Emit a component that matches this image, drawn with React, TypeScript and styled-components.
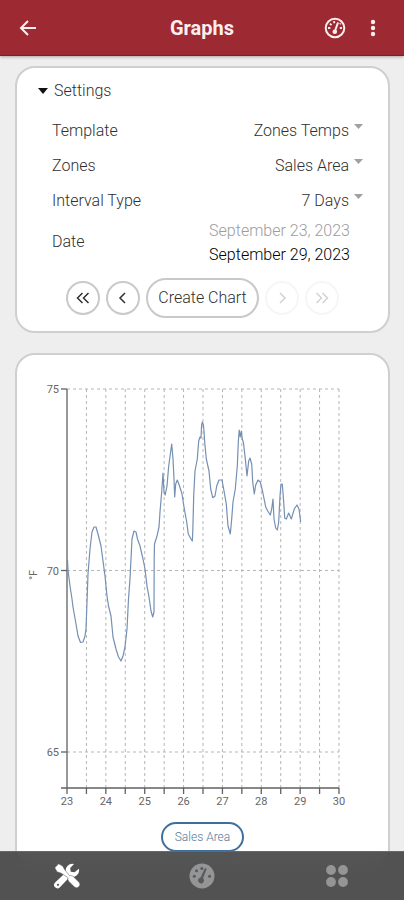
import React, { useState } from "react";
import styled, { createGlobalStyle } from "styled-components";

const GlobalStyle = createGlobalStyle`
  *, *::before, *::after { box-sizing: border-box; }
  body {
    margin: 0;
    background: #eeeeee;
    color: #303030;
    font-family: Roboto, "Liberation Sans", sans-serif;
    font-size: 16px;
    font-weight: 300;
    line-height: 20px;
  }
  button, select, input { font: inherit; color: inherit; }
`;

const Shell = styled.div`
  position: relative;
  display: flex;
  flex-direction: column;
  height: 100vh;
  overflow: hidden;
`;

const TopBar = styled.header`
  display: grid;
  grid-template-columns: 1fr auto 1fr;
  align-items: center;
  flex: none;
  height: 56px;
  padding: 0 18px;
  color: #fbeeee;
  background: #9d2932;
  border-bottom: 1px solid #8c1a24;
  box-shadow: 0 1px 3px rgba(0, 0, 0, 0.3);
  z-index: 1;
`;

const Title = styled.h1`
  margin: 0;
  font-size: 20px;
  line-height: 24px;
  font-weight: 700;
`;

const BarGroup = styled.div<{ $end?: boolean }>`
  display: flex;
  justify-content: ${(p) => (p.$end ? "flex-end" : "flex-start")};
  gap: 14px;
`;

const BarButton = styled.button`
  display: flex;
  align-items: center;
  justify-content: center;
  min-width: 20px;
  height: 24px;
  padding: 0;
  border: 0;
  background: none;
`;

const MoreButton = styled(BarButton)`
  min-width: 26px;
`;

const Content = styled.main`
  display: flex;
  flex-direction: column;
  gap: 20px;
  flex: 1;
  min-height: 0;
  padding: 10px 14px 64px 15px;
  overflow-y: auto;
  scrollbar-width: none;
`;

const Card = styled.section`
  flex: none;
  background: #ffffff;
  border: 2px solid #cfcfcf;
  border-radius: 20px;
`;

const SettingsCard = styled(Card)`
  padding: 13px 20px;
`;

const ChartCard = styled(Card)`
  padding-bottom: 16px;
`;

const SectionToggle = styled.button`
  display: flex;
  align-items: center;
  gap: 5px;
  margin-bottom: 12px;
  padding: 0;
  border: 0;
  background: none;
`;

const Fields = styled.div`
  display: flex;
  flex-direction: column;
  padding-left: 15px;
`;

const Field = styled.div`
  display: flex;
  align-items: center;
  justify-content: space-between;
  min-height: 35px;
`;

const SelectBox = styled.div`
  display: flex;
  gap: 5px;
  padding-right: 5px;
`;

const Select = styled.select`
  appearance: none;
  width: 140px;
  height: 20px;
  padding: 0;
  border: 0;
  outline: 0;
  background: none;
  text-align-last: right;
`;

const Caret = styled.svg`
  margin-top: 3px;
  fill: #a0a0a0;
`;

const DateRange = styled.div`
  display: flex;
  flex-direction: column;
  padding-right: 18px;
`;

const DateInput = styled.input<{ $muted?: boolean }>`
  width: 150px;
  height: 24px;
  padding: 0;
  border: 0;
  outline: 0;
  background: none;
  text-align: right;
  color: ${(p) => (p.$muted ? "#9c9c9c" : "#000000")};
`;

const Controls = styled.div`
  display: flex;
  align-items: center;
  justify-content: center;
  gap: 6px;
  margin-top: 12px;
`;

const RoundButton = styled.button`
  display: flex;
  align-items: center;
  justify-content: center;
  width: 34px;
  height: 34px;
  padding: 0;
  border: 2px solid #c9c9c9;
  border-radius: 50%;
  background: #ffffff;
  &:disabled {
    color: #d2d2d2;
    border-color: #f6f6f6;
  }
`;

const CreateButton = styled.button`
  height: 40px;
  padding: 0 10px;
  border: 2px solid #c9c9c9;
  border-radius: 20px;
  background: #ffffff;
`;

const Chart = styled.svg`
  display: block;
  width: 100%;
  height: auto;
`;

const AxisText = styled.text`
  font-size: 11px;
  font-weight: 400;
  fill: #666666;
`;

const Legend = styled.div`
  display: flex;
  justify-content: center;
`;

const LegendButton = styled.button`
  height: 30px;
  padding: 0 12px;
  border: 2px solid #3f6f9c;
  border-radius: 15px;
  background: #ffffff;
  color: #58779b;
  font-size: 12px;
`;

const TabBar = styled.nav`
  position: absolute;
  left: 0;
  right: 0;
  bottom: 0;
  display: grid;
  grid-template-columns: repeat(3, 1fr);
  height: 49px;
  background: rgba(48, 48, 48, 0.82);
  border-top: 1px solid #686868;
  border-bottom: 1px solid #694a4c;
  backdrop-filter: blur(8px);
`;

const Tab = styled.a<{ $active?: boolean }>`
  display: flex;
  align-items: center;
  justify-content: center;
  color: ${(p) => (p.$active ? "#ffffff" : "#959595")};
`;

function BackIcon() {
  return (
    <svg width="18" height="18" viewBox="0 0 18 18" fill="none" stroke="currentColor" strokeWidth="2">
      <path d="M17 9H2.5M9 2 2 9l7 7" />
    </svg>
  );
}

function GaugeOutlineIcon() {
  return (
    <svg width="22" height="22" viewBox="0 0 22 22" fill="none" stroke="currentColor">
      <circle cx="11" cy="11" r="9.3" strokeWidth="2" />
      <path d="M13.8 6.2 11 14" strokeWidth="2" strokeLinecap="round" />
      <circle cx="10.8" cy="14.7" r="2.3" fill="currentColor" stroke="none" />
      <path d="M4 11h2.4M5.9 6.6l1.7 1.5M10.2 4v2.2M15.8 11H18M15.8 7.2l.9-.8" strokeWidth="1.8" />
    </svg>
  );
}

function GaugeIcon() {
  return (
    <svg width="26" height="26" viewBox="0 0 26 26">
      <circle cx="13" cy="13" r="12.5" fill="currentColor" />
      <g fill="#555b5e">
        <circle cx="5.3" cy="13.2" r="1.5" />
        <circle cx="7.5" cy="7.8" r="1.5" />
        <circle cx="12.8" cy="5.4" r="1.5" />
        <circle cx="20.6" cy="13.2" r="1.5" />
        <path d="M17.4 6.4 14 15.2a3 3 0 1 1-2.4-.7l4-8.7c.5-1 2.1-.3 1.8.6Z" />
      </g>
    </svg>
  );
}

function MoreIcon() {
  return (
    <svg width="6" height="18" viewBox="0 0 6 18" fill="currentColor">
      <circle cx="3" cy="3" r="2.2" />
      <circle cx="3" cy="9" r="2.2" />
      <circle cx="3" cy="15" r="2.2" />
    </svg>
  );
}

function ToolsIcon() {
  return (
    <svg width="26" height="26" viewBox="0 0 26 26">
      <path
        d="M24.9 5.7a6.6 6.6 0 0 1-8.7 7.8L5.9 24.2a3.3 3.3 0 0 1-4.8-4.7L12 9.2A6.6 6.6 0 0 1 20 1l-3.8 3.9.5 3.8 3.9.6Z"
        fill="currentColor"
      />
      <circle cx="4" cy="21.8" r="1.1" fill="#555555" />
      <path
        d="M.8 4.8 4.6.8 8.6 3l2 3.6 5.1 6.2c1.3-.4 2.8-.1 3.8.9l5.3 5.4c1.4 1.4 1.4 3.2 0 4.6-1.3 1.3-3.2 1.3-4.6 0l-5.3-5.3c-1-1-1.3-2.4-.9-3.7L7.2 10.2 3 8.8Z"
        fill="currentColor"
        stroke="#555555"
        strokeWidth="0.5"
      />
    </svg>
  );
}

function AppsIcon() {
  return (
    <svg width="22" height="22" viewBox="0 0 22 22" fill="currentColor">
      <circle cx="5" cy="5" r="4.9" />
      <circle cx="17" cy="5" r="4.9" />
      <circle cx="5" cy="17" r="4.9" />
      <circle cx="17" cy="17" r="4.9" />
    </svg>
  );
}

function Chevron({ back, double }: { back?: boolean; double?: boolean }) {
  const single = back ? "M10 3 5 8l5 5" : "M6 3l5 5-5 5";
  const pair = back ? "M7.5 3 2.5 8l5 5M13.5 3l-5 5 5 5" : "M2.5 3l5 5-5 5M8.5 3l5 5-5 5";
  return (
    <svg width="16" height="16" viewBox="0 0 16 16" fill="none" stroke="currentColor" strokeWidth="1.5">
      <path d={double ? pair : single} />
    </svg>
  );
}

function Dropdown({ id, label, options }: { id: string; label: string; options: string[] }) {
  return (
    <Field>
      <label htmlFor={id}>{label}</label>
      <SelectBox>
        <Select id={id}>
          {options.map((option) => (
            <option key={option}>{option}</option>
          ))}
        </Select>
        <Caret width="9" height="5" viewBox="0 0 9 5">
          <path d="M0 0h9L4.5 5Z" />
        </Caret>
      </SelectBox>
    </Field>
  );
}

const PLOT = { left: 50, top: 34, width: 272, height: 399, degree: 36.3 };
const DAYS = [23, 24, 25, 26, 27, 28, 29, 30];
const TEMPS = [75, 70, 65];

const SALES_AREA_TRACE = `
  0.5,171 1,181 3,197 5,210 6,218 9,235 11,247 13.5,253.5 16,253 18,247 19,240 20,213 21,185
  23,160 25,143 27,138 29,138 31,145 34,157 36,172 38,187 40,207 41.5,217 44,227 46,248 49,260
  51.5,268 54,272 56,267 58,258 60,240 61.5,210 63,190 64,170 65,150 67,142 69,143 70.5,150
  73,157 76,170 78,180 80,197 82,208 84,222 85.7,228 87,223 87.2,170 87.5,155 90,147 92,138
  93,123 94.7,103 96,84 97,103 98.2,106 100,97 101.7,77 104.7,55 106,70 107,90 107.7,108
  108.7,95 110.3,91 112.5,97 115,105 117,118 119.7,133 121.3,145 124,150 125.3,152 125.8,142
  126.7,107 128,82 130.3,70 131.7,52 133,48 134,49 134.6,36 135.4,33 136.4,36 137,42 137.7,53
  139.3,70 142,82 143.7,100 145.7,108.7 148,107 149.7,97 152,91 155,91 157,102 159.3,115 161,137
  163.3,145 164.7,130 166,113 168.3,100 170.3,77 171.3,53 172.2,41 173.3,48 174.3,42 175.3,50
  176.5,54 178.3,70 180,87 181.7,72 183,69 184.7,75 185.7,93 187.3,105 188.7,96 191,91 193.3,93
  195.7,103 198.7,118 200.7,122 203.3,126 204.7,120 206,110 207,130 208.7,139 210.3,141
  211.7,133 213,107 214,95 215.3,95 216.7,113 217.7,129 219.3,130 221.7,124 224.3,130 227.3,120
  230,116 232,120 233.7,133
`;

function TemperatureChart() {
  const { left, top, width, height, degree } = PLOT;
  const halfDays = Array.from({ length: 15 }, (_, i) => left + (width * i) / 14);
  const bottom = top + height;
  return (
    <Chart viewBox="0 0 371 467" role="img" aria-label="Sales Area temperature by day">
      <g stroke="#b5b5b5" strokeWidth="1" strokeDasharray="3 3">
        {halfDays.slice(1).map((x) => (
          <path key={x} d={`M${x} ${top}V${bottom}`} />
        ))}
        {TEMPS.map((t) => (
          <path key={t} d={`M${left} ${top + (75 - t) * degree}h${width}`} />
        ))}
      </g>
      <g stroke="#626262" strokeWidth="1.3">
        <path d={`M${left - 6} ${bottom}H${left + width}M${left} ${top}V${bottom}`} />
        {halfDays.map((x) => (
          <path key={x} d={`M${x} ${bottom}v6`} />
        ))}
        {TEMPS.map((t) => (
          <path key={t} d={`M${left - 6} ${top + (75 - t) * degree}h6`} />
        ))}
      </g>
      <polyline
        transform={`translate(${left} ${top})`}
        points={SALES_AREA_TRACE}
        fill="none"
        stroke="#7590b2"
        strokeWidth="1.2"
        strokeLinejoin="round"
      />
      {TEMPS.map((t) => (
        <AxisText key={t} x={left - 8} y={top + (75 - t) * degree + 4} textAnchor="end">
          {t}
        </AxisText>
      ))}
      {DAYS.map((d, i) => (
        <AxisText key={d} x={left + (width * i) / 7} y={bottom + 17} textAnchor="middle">
          {d}
        </AxisText>
      ))}
      <AxisText transform="translate(20 220) rotate(-90)" textAnchor="middle">
        °F
      </AxisText>
    </Chart>
  );
}

export default function App() {
  const [open, setOpen] = useState(true);
  return (
    <>
      <GlobalStyle />
      <Shell>
        <TopBar>
          <BarGroup>
            <BarButton aria-label="Back">
              <BackIcon />
            </BarButton>
          </BarGroup>
          <Title>Graphs</Title>
          <BarGroup $end>
            <BarButton aria-label="Dashboard">
              <GaugeOutlineIcon />
            </BarButton>
            <MoreButton aria-label="More">
              <MoreIcon />
            </MoreButton>
          </BarGroup>
        </TopBar>
        <Content>
          <SettingsCard>
            <SectionToggle aria-expanded={open} onClick={() => setOpen(!open)}>
              <svg width="12" height="7" viewBox="0 0 12 7">
                <path d="M1 0h10L6 6Z" fill="#111111" />
              </svg>
              Settings
            </SectionToggle>
            {open && (
              <>
                <Fields>
                  <Dropdown id="template" label="Template" options={["Zones Temps"]} />
                  <Dropdown id="zones" label="Zones" options={["Sales Area"]} />
                  <Dropdown id="interval" label="Interval Type" options={["7 Days"]} />
                  <Field>
                    <label htmlFor="end-date">Date</label>
                    <DateRange>
                      <DateInput $muted aria-label="Start date" readOnly value="September 23, 2023" />
                      <DateInput id="end-date" readOnly value="September 29, 2023" />
                    </DateRange>
                  </Field>
                </Fields>
                <Controls>
                  <RoundButton aria-label="Back one interval">
                    <Chevron back double />
                  </RoundButton>
                  <RoundButton aria-label="Back one day">
                    <Chevron back />
                  </RoundButton>
                  <CreateButton>Create Chart</CreateButton>
                  <RoundButton aria-label="Forward one day" disabled>
                    <Chevron />
                  </RoundButton>
                  <RoundButton aria-label="Forward one interval" disabled>
                    <Chevron double />
                  </RoundButton>
                </Controls>
              </>
            )}
          </SettingsCard>
          <ChartCard>
            <TemperatureChart />
            <Legend>
              <LegendButton>Sales Area</LegendButton>
            </Legend>
          </ChartCard>
        </Content>
        <TabBar>
          <Tab href="#tools" aria-label="Tools" $active>
            <ToolsIcon />
          </Tab>
          <Tab href="#dashboard" aria-label="Dashboard">
            <GaugeIcon />
          </Tab>
          <Tab href="#apps" aria-label="Apps">
            <AppsIcon />
          </Tab>
        </TabBar>
      </Shell>
    </>
  );
}
